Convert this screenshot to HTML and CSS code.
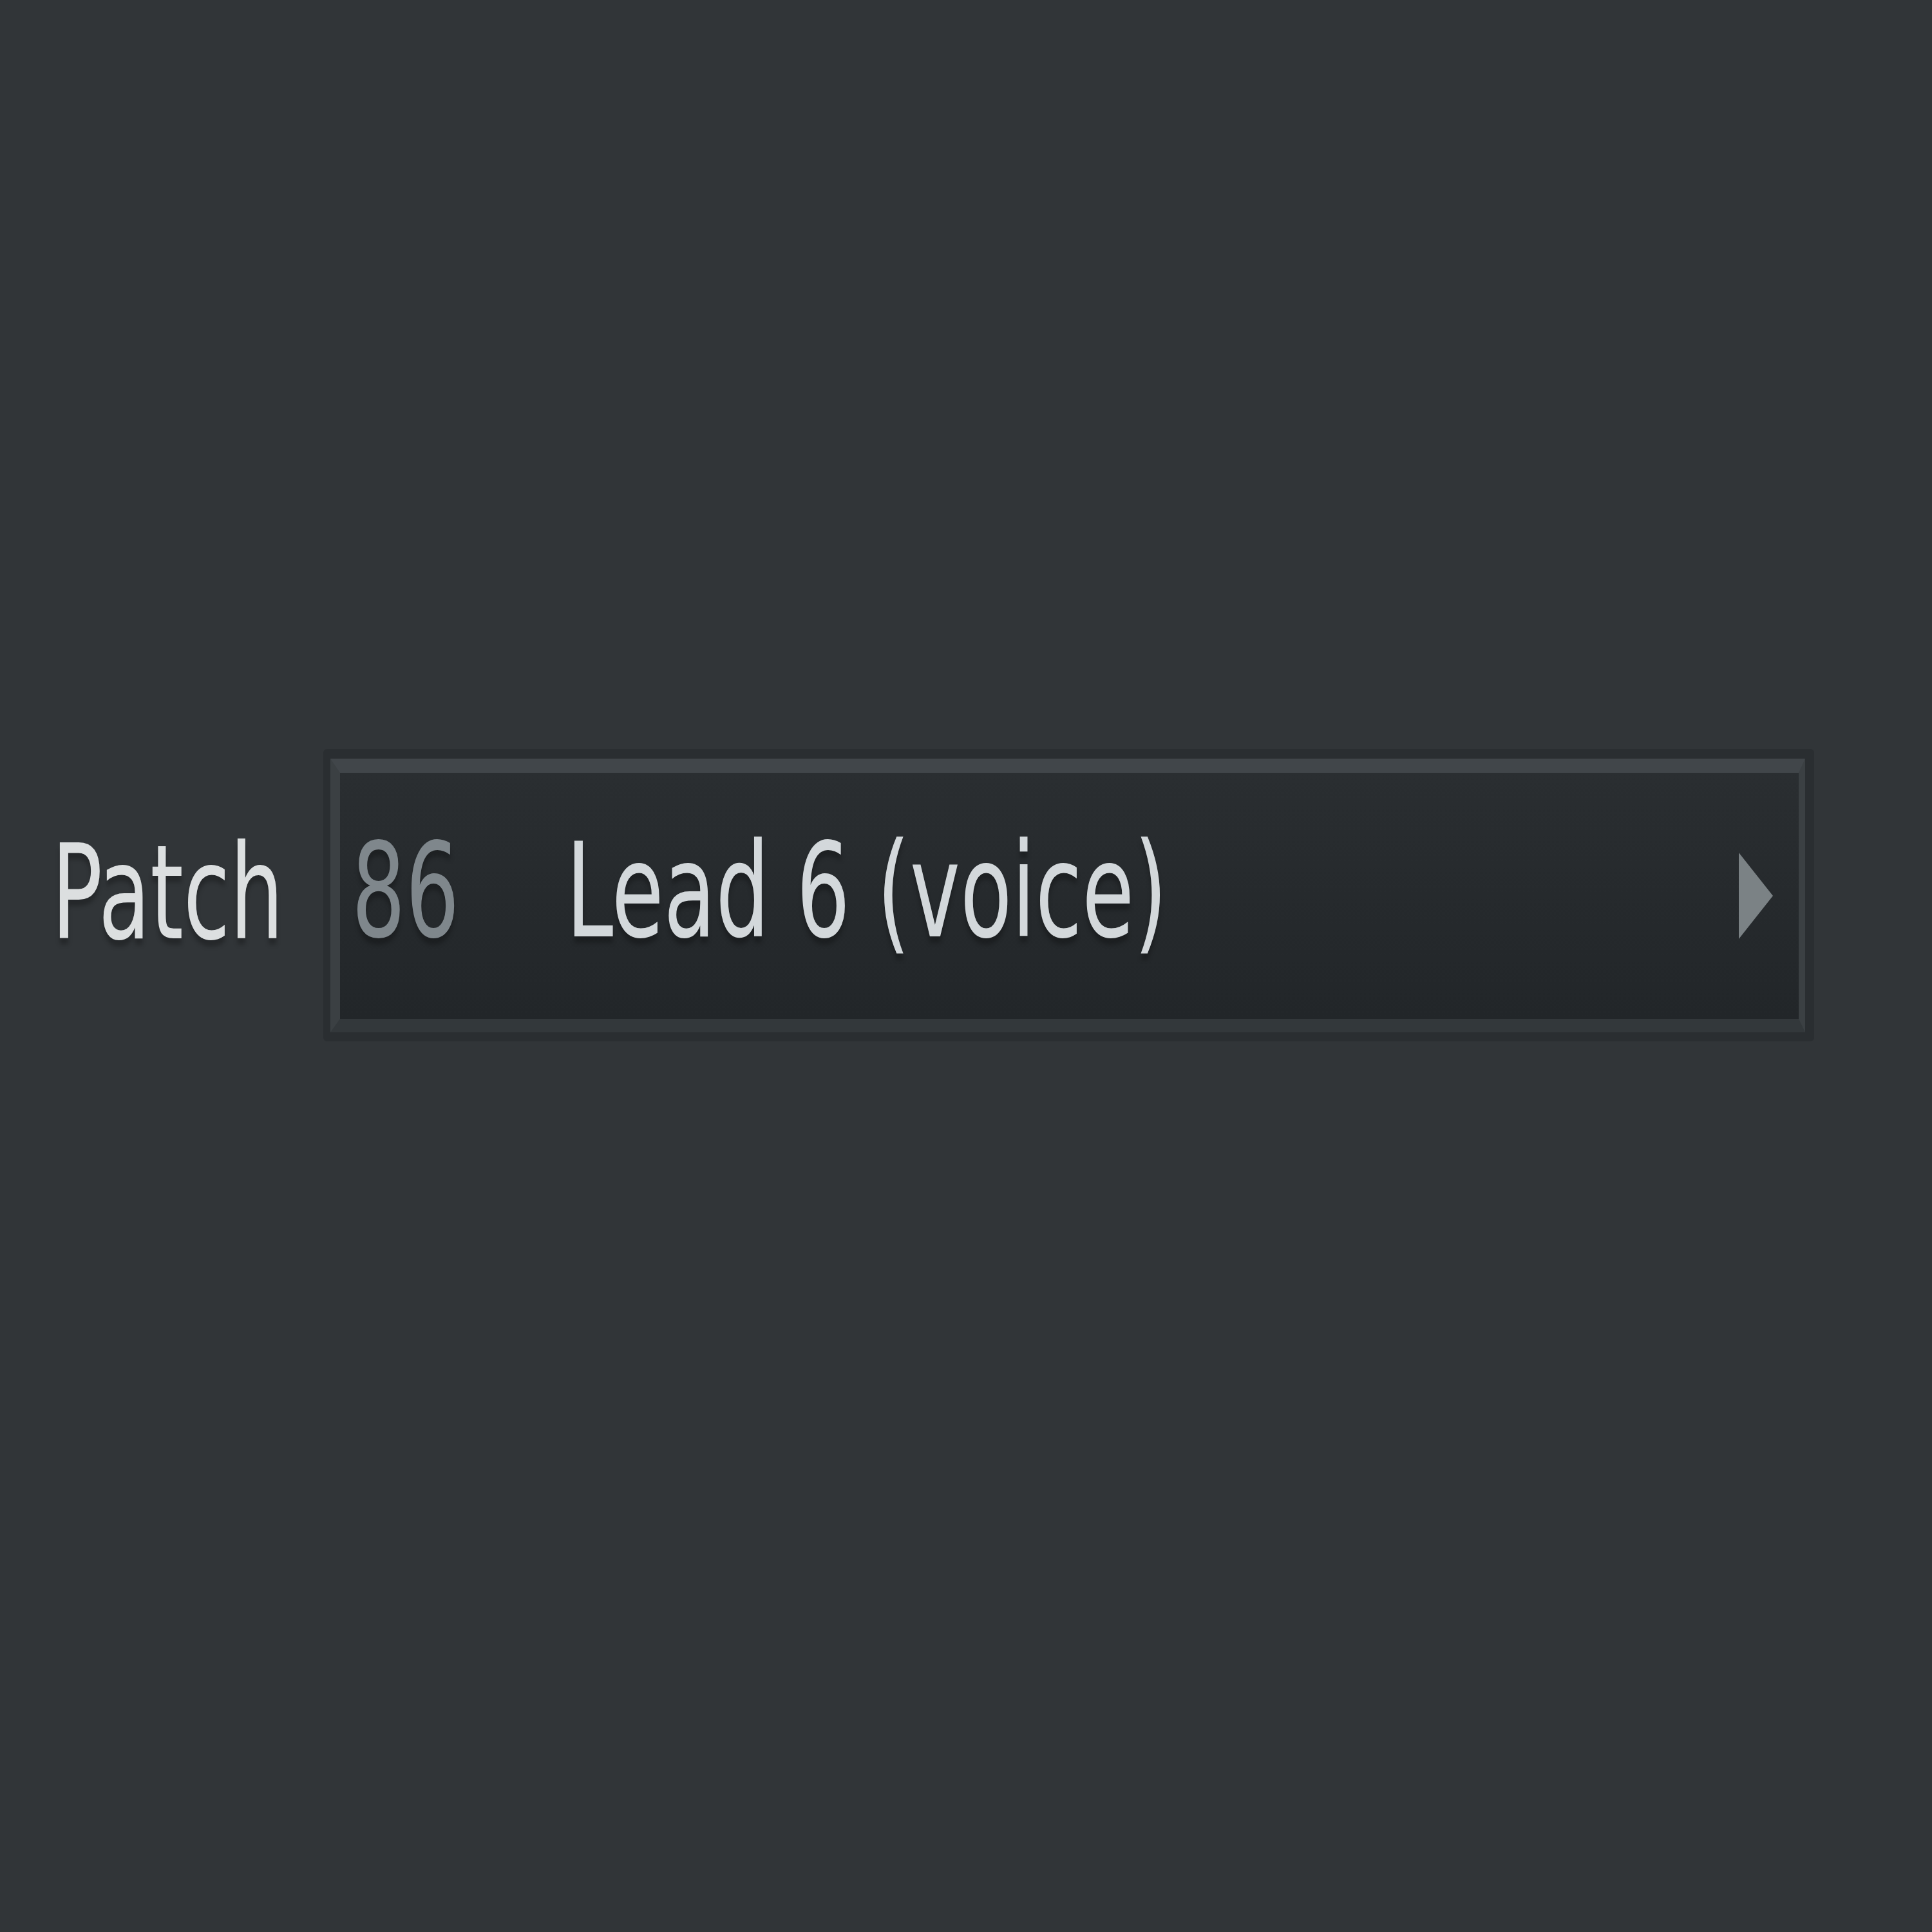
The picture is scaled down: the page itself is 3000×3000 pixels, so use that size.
FILE: index.html
```html
<!DOCTYPE html>
<html lang="en">
<head>
<meta charset="utf-8">
<title>Patch</title>
<link rel="stylesheet" href="styles.css">
</head>
<body>
<div class="stage">
  <div class="row">
    <div class="label"><span class="squeeze">Patch</span></div>
    <div class="box">
      <div class="frame">
        <div class="num"><span class="squeeze">86</span></div>
        <div class="name"><span class="squeeze">Lead 6 (voice)</span></div>
        <svg class="arrow" viewBox="0 0 53 134" width="53" height="134" aria-hidden="true">
          <polygon points="0,0 53,67 0,134" fill="#7b8285"/>
        </svg>
      </div>
    </div>
  </div>
</div>
</body>
</html>
```
FILE: styles.css
```css
html, body {
  margin: 0;
  padding: 0;
  background: #313538;
}
body {
  width: 3000px;
  height: 3000px;
  font-family: "DejaVu Sans Condensed", "DejaVu Sans", sans-serif;
  font-stretch: condensed;
}
.stage {
  padding: 1163px 0 0 80px;
}
.row {
  display: flex;
  align-items: center;
}
.squeeze {
  display: inline-block;
  transform: scaleX(0.72);
  transform-origin: left center;
  white-space: nowrap;
  font-size: 203px;
  line-height: 1;
  text-shadow: 0 10px 8px rgba(0, 0, 0, 0.25);
}
.label {
  width: 422px;
  flex: none;
  color: #dcdfe0;
  padding-bottom: 6px;
}
.box {
  flex: none;
  width: 2290px;
  border-style: solid;
  border-color: #2a2e31;
  border-width: 15px 14px 14px 11px;
  border-radius: 6px;
}
.frame {
  display: flex;
  align-items: center;
  height: 382px;
  border-style: solid;
  border-color: #41464a #3b4043 #33383b #3b4043;
  border-width: 22px 10px 21px 15px;
  background: linear-gradient(to bottom, #2a2e31, #222629);
  padding-left: 18px;
  padding-right: 40px;
}
.num {
  width: 333px;
  flex: none;
  color: #7f878c;
  padding-bottom: 14px;
}
.name {
  flex: 1;
  color: #d3d8db;
  padding-bottom: 14px;
}
.arrow {
  flex: none;
  display: block;
}
```
